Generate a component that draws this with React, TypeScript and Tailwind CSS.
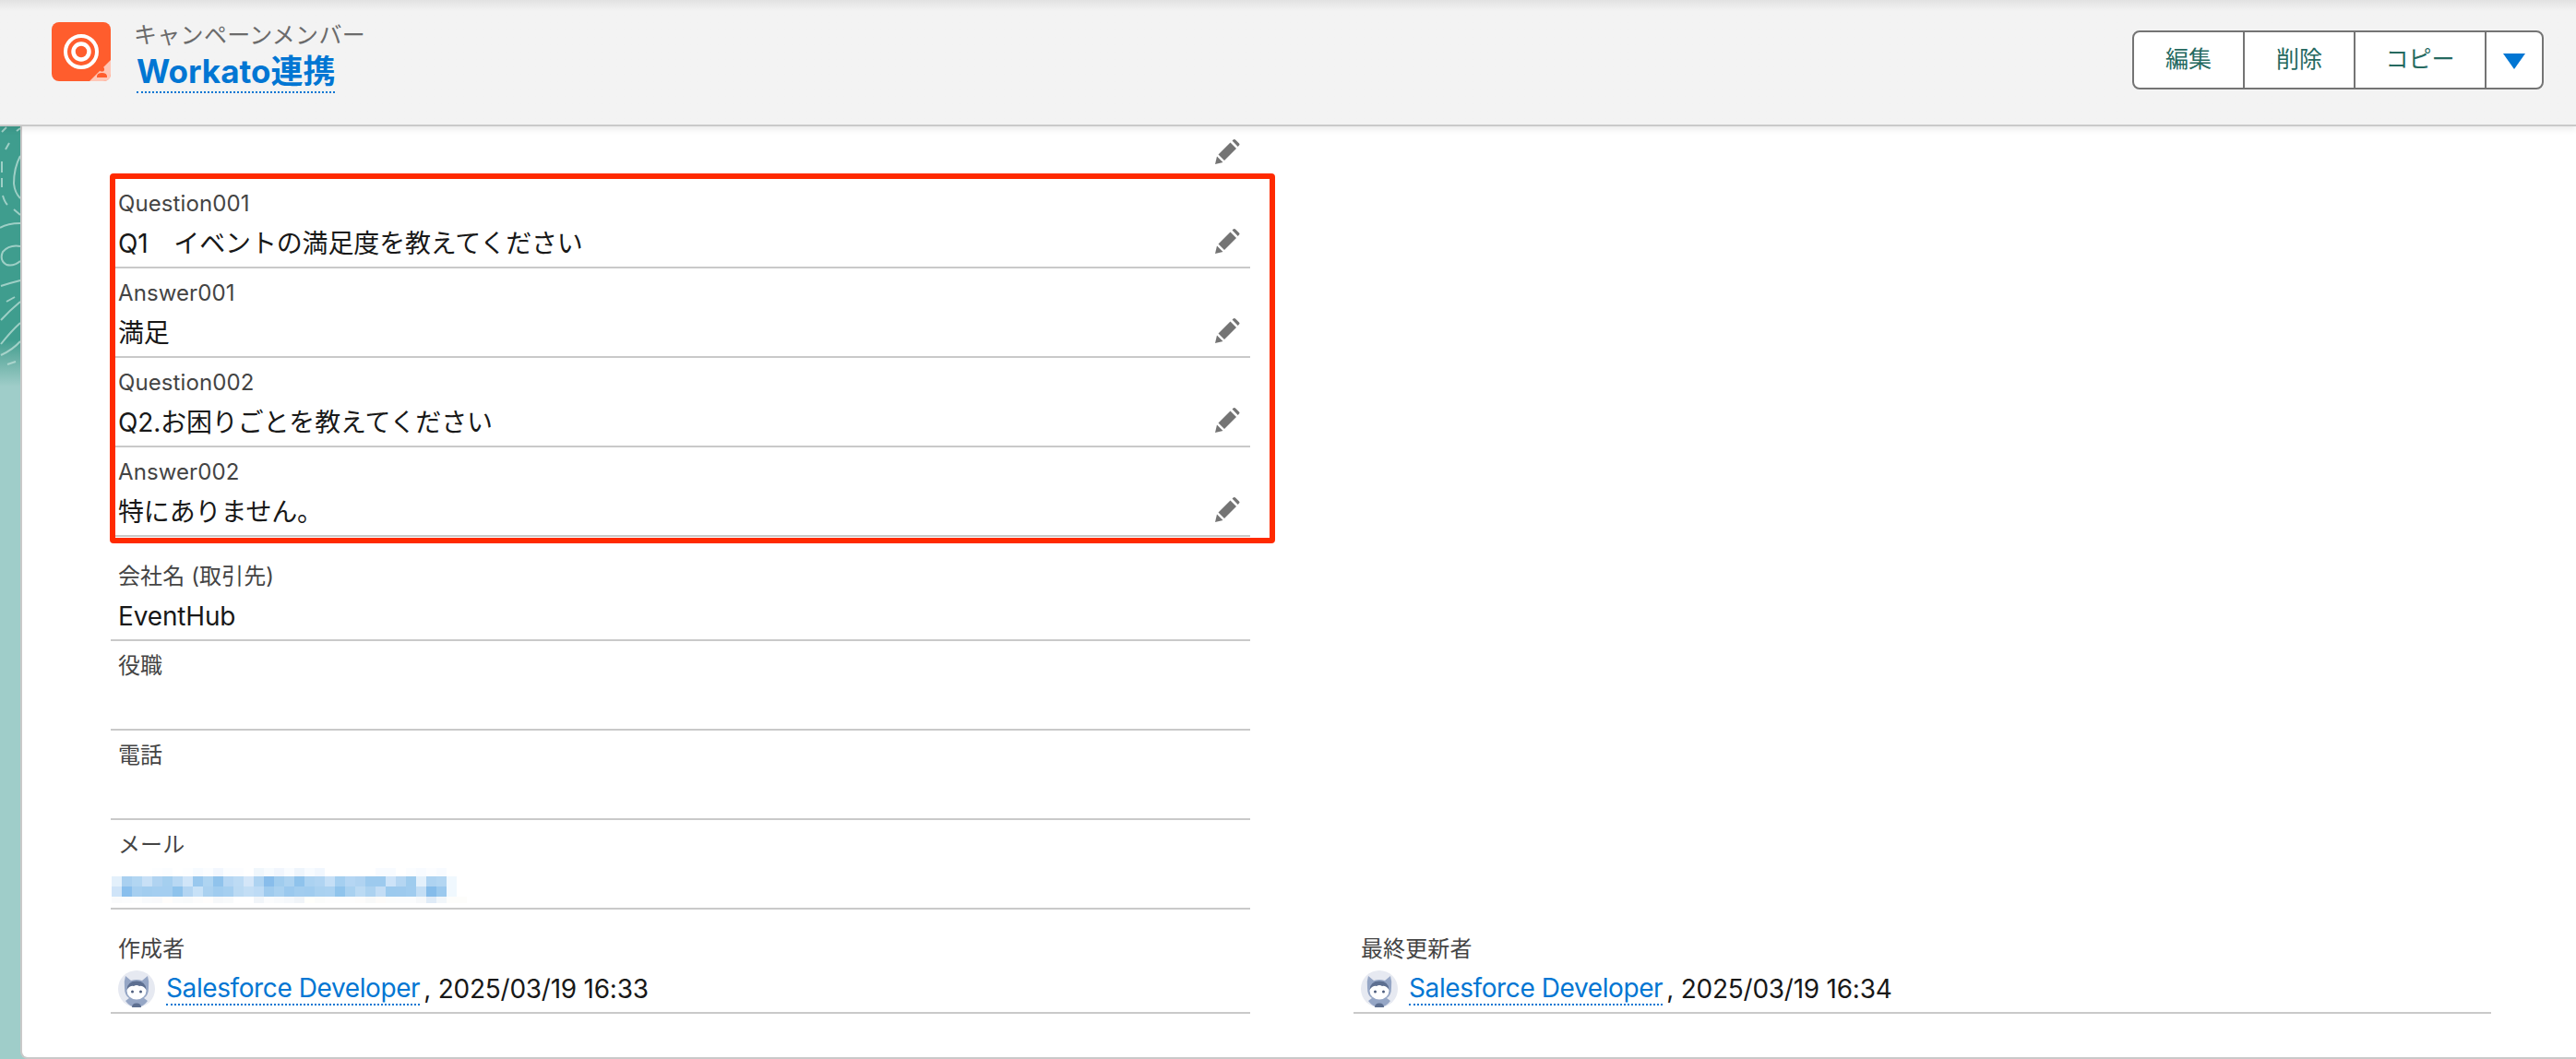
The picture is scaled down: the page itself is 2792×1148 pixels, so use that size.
import React from "react";

const font = { fontFamily: 'Inter, "Noto Sans CJK JP", sans-serif' };

function Pencil() {
  return (
    <svg width="27" height="27" viewBox="0 0 27 27" className="block" fill="#747474">
      <path d="M0 27 L2 18.5 L8.5 25 Z" />
      <path d="M3.5 16.5 L16.5 3.5 L23 10 L10 23 Z" />
      <path d="M18.5 1.5 L20 0.3 Q21 -0.4 22 .5 L26 4.5 Q27 5.5 26 6.5 L24.7 8 Z" />
    </svg>
  );
}

function Avatar() {
  return (
    <svg width="40" height="40" viewBox="0 0 40 40" className="block shrink-0">
      <circle cx="20" cy="20" r="20" fill="#e6e9f1" />
      <path d="M8 6 L14 11 Q20 9 26 11 L32 6 Q34 12 33 19 Q33 27 28 30 L32 33 Q27 40 20 40 Q13 40 8 33 L12 30 Q7 27 7 19 Q6 12 8 6 Z" fill="#95a6c5" />
      <ellipse cx="20" cy="22" rx="10.5" ry="9.5" fill="#ffffff" />
      <path d="M9.5 21 Q10 11.5 20 11.5 Q30 11.5 30.5 21 Q27 16 23 17 Q20 15 17 17 Q13 16 9.5 21 Z" fill="#5d6f90" />
      <circle cx="15.5" cy="23" r="1.5" fill="#4d5d7d" />
      <circle cx="24.5" cy="23" r="1.5" fill="#4d5d7d" />
      <path d="M15 40 Q15 35.5 20 35.5 Q25 35.5 25 40 Z" fill="#5d6f90" />
    </svg>
  );
}

function TargetIcon() {
  return (
    <svg width="64" height="64" viewBox="0 0 64 64" className="block shrink-0">
      <rect width="64" height="64" rx="8" fill="#ff5d2d" />
      <path d="M64 41 L64 56 Q64 64 56 64 L41 64 Z" fill="#ffc6b6" />
      <circle cx="32" cy="32" r="17" fill="none" stroke="#fff" strokeWidth="4" />
      <circle cx="32" cy="32" r="8.5" fill="none" stroke="#fff" strokeWidth="4.5" />
      <circle cx="54.5" cy="51" r="2.6" fill="#ff5d2d" />
      <path d="M49 59 Q49 55 54.5 55 Q60 55 60 59 L60 60 L49 60 Z" fill="#ff5d2d" />
    </svg>
  );
}

const mosaicRows: { y: number; h: number; x: number; colors: string[] }[] = [
  {
    y: 0,
    h: 9,
    x: 0,
    colors: ["#fff", "#fff", "#fff", "#fff", "#fdfeff", "#fbfdff", "#fff", "#fdfeff", "#f7fbff", "#fbfdff", "#f2f7fe", "#fbfdff", "#fcfdff", "#fff", "#f0f7fc", "#f7fbfe", "#f1f6fd", "#f9fcff", "#eef5fc", "#f7fbff", "#f1f7fe", "#fff", "#fff", "#fff", "#fff", "#fff", "#f8fbff", "#f8fbff", "#fff", "#fbfdff", "#f8fbff", "#fcfdff", "#f8fbff", "#fff", "#fff"],
  },
  {
    y: 9,
    h: 11,
    x: 0,
    colors: ["#e3f0fb", "#a9d0f0", "#b2d6f2", "#c8e0f6", "#b0d3f1", "#a5cfef", "#b8d8f3", "#d0e5f8", "#99c8ee", "#aed4f1", "#90c3ec", "#b5d6f3", "#bddbf4", "#d4e6f8", "#aed3f1", "#88bdeb", "#a0ccee", "#acd2f0", "#8fc3ec", "#abd2f1", "#b0d4f2", "#c5dff6", "#a5cff0", "#b5d6f3", "#b0d3f1", "#9dcaee", "#9dcaee", "#cde3f8", "#b5d6f2", "#9fccee", "#e3f0fb", "#aed3f1", "#b3d6f2", "#f0f8fe"],
  },
  {
    y: 20,
    h: 11,
    x: 0,
    colors: ["#cfe4f8", "#89bfed", "#a6cff0", "#a2cdef", "#a4cef0", "#a4cef0", "#8ec3ec", "#b3d5f2", "#c7e1f7", "#aad1f0", "#a0ccef", "#a5cff0", "#bbdaf3", "#c3def5", "#bddbf5", "#9fcbee", "#a9d1f0", "#9bc9ee", "#a2cdef", "#a0ccef", "#a9d1f0", "#abd2f1", "#90c4ec", "#a9d1f0", "#bbdaf3", "#acd2f0", "#c3ddf5", "#9ccaee", "#9dcaee", "#a0ccef", "#c3def5", "#85bcea", "#9bc9ee", "#f0f8fe"],
  },
  {
    y: 31,
    h: 7,
    x: 0,
    colors: ["#fafbfc", "#fbfcfd", "#fcfdfd", "#f8fafc", "#f8f9fb", "#fffdfb", "#f9fbfc", "#f8fafb", "#fcfcfc", "#fffdfc", "#f6f8fa", "#f8fafb", "#fff", "#fff", "#f1f5f9", "#fbfcfd", "#f8fafc", "#f5f8fb", "#f0f4f8", "#fffffb", "#fbfcfb", "#fdfdfd", "#fdfdfd", "#fdfdfd", "#fdfcfb", "#f8f9f9", "#fdfbf9", "#fbfcfc", "#fbfcfd", "#fbfcfd", "#f6f8fa", "#dfebf7", "#f1f6fa", "#fdfdfb", "#fdfdfb"],
  },
];

function Mosaic() {
  return (
    <svg width="385" height="38" viewBox="0 0 385 38" className="block" shapeRendering="crispEdges">
      {mosaicRows.map((r) =>
        r.colors.map((c, i) => <rect key={r.y + "-" + i} x={r.x + i * 11} y={r.y} width="11" height={r.h} fill={c} />)
      )}
    </svg>
  );
}

function Row({ label, value, edit = true, children }: { label: string; value?: string; edit?: boolean; children?: React.ReactNode }) {
  return (
    <div className="h-[97px] border-b-2 border-[#c9c9c9] pl-2 pt-[15px] relative flex">
      <div className="flex-1 min-w-0">
        <div className="text-[24px] leading-6 text-[#444444] tracking-[0.1px]">{label}</div>
        <div className="mt-[13px] h-9 text-[28px] leading-9 text-[#181818] tracking-[-0.15px] flex items-center whitespace-pre">{children ?? value}</div>
      </div>
      {edit && (
        <div className="w-[38px] shrink-0 pt-[39px]">
          <Pencil />
        </div>
      )}
    </div>
  );
}

function Creator({ time }: { time: string }) {
  return (
    <span className="flex items-center">
      <Avatar />
      <span className="ml-[12px] text-[#0176d3] border-b-2 border-dotted border-[#0176d3] leading-[34px] tracking-[-0.4px]">Salesforce Developer</span>
      <span className="ml-[4px] tracking-[-0.25px]">, {time}</span>
    </span>
  );
}

export default function App() {
  return (
    <div className="w-[2792px] h-[1148px] overflow-hidden flex flex-col bg-[#9fcdc9]" style={font}>
      <header className="relative z-10 h-[137px] shrink-0 bg-gradient-to-b from-[#e2e2e2] to-[#f3f3f3] to-[12px] border-b-2 border-[#c9c9c9] shadow-[0_4px_6px_rgba(0,0,0,0.07)] flex items-start justify-between pl-[56px] pr-[35px]">
        <div className="flex pt-6">
          <TargetIcon />
          <div className="ml-[25px]">
            <div className="text-[25px] leading-7 text-[#6b6b6b] whitespace-nowrap tracking-[0.3px]">キャンペーンメンバー</div>
            <div className="mt-[3px] ml-[3px] inline-block text-[35px] leading-[44px] font-bold text-[#0176d3] border-b-2 border-dotted border-[#0176d3]">Workato連携</div>
          </div>
        </div>
        <div className="mt-[33px] h-16 flex bg-white border-2 border-[#747474] rounded-lg text-[25px] text-[#25695f]">
          <div className="w-[120px] flex items-center justify-center border-r-2 border-[#747474]">編集</div>
          <div className="w-[120px] flex items-center justify-center border-r-2 border-[#747474]">削除</div>
          <div className="w-[142px] flex items-center justify-center border-r-2 border-[#747474]">コピー</div>
          <div className="w-[60px] flex items-center justify-center">
            <svg width="24" height="18" viewBox="0 0 24 18" className="mt-1">
              <path d="M0 0 H24 L12 17 Z" fill="#0176d3" />
            </svg>
          </div>
        </div>
      </header>

      <main className="flex-1 flex relative min-h-0">
        <div className="absolute left-0 top-0 w-[24px] h-[282px] bg-gradient-to-b from-[#3f9d8e] from-[82%] to-[#9fcdc9]">
          <svg width="24" height="282" viewBox="0 0 24 282" className="block" fill="none" stroke="#bfe0d8" strokeWidth="2" strokeOpacity="0.75">
            <path d="M2 6 L7 1 M18 5 L22 2" />
            <path d="M6 25 L10 18" />
            <path d="M2 38 L2 50 M2 56 L2 66" />
            <path d="M22 32 Q15 45 15 62 Q16 72 22 78" />
            <path d="M3 75 Q5 82 8 85 M15 90 L22 96" />
            <path d="M0 110 Q8 105 22 105" />
            <path d="M22 130 Q10 128 3 136 Q-1 145 7 150 Q15 152 22 146" />
            <path d="M1 173 Q10 170 22 167" />
            <path d="M7 190 L16 185" />
            <path d="M1 210 Q10 200 22 190" />
            <path d="M1 236 Q12 222 22 213" />
            <path d="M1 248 Q14 242 22 233" />
            <path d="M8 258 L17 255" />
          </svg>
        </div>
        <div className="relative flex-1 ml-[22px] bg-white border-l-2 border-b-2 border-[#c9c9c9] rounded-bl-lg pl-[96px] min-h-0">
          <div className="w-[1235px]">
            <div className="h-[57px] flex justify-end pr-[11px] pt-[14px]">
              <Pencil />
            </div>
            <div className="relative">
              <Row label="Question001" value="Q1　イベントの満足度を教えてください" />
              <Row label="Answer001" value="満足" />
              <Row label="Question002" value="Q2.お困りごとを教えてください" />
              <Row label="Answer002" value="特にありません。" />
              <div className="absolute -left-px -top-[6px] w-[1263px] h-[401px] border-[6px] border-[#ff2a00] rounded-sm pointer-events-none" />
            </div>
            <div className="mt-[16px]">
              <Row label="会社名 (取引先)" value="EventHub" edit={false} />
              <Row label="役職" edit={false} />
              <Row label="電話" edit={false} />
              <Row label="メール" edit={false}>
                <span className="-ml-[7px] mt-[1px] block">
                  <Mosaic />
                </span>
              </Row>
            </div>
          </div>
          <div className="mt-[16px] flex gap-[112px]">
            <div className="w-[1235px]">
              <Row label="作成者" edit={false}>
                <Creator time="2025/03/19 16:33" />
              </Row>
            </div>
            <div className="w-[1233px]">
              <Row label="最終更新者" edit={false}>
                <Creator time="2025/03/19 16:34" />
              </Row>
            </div>
          </div>
        </div>
      </main>
    </div>
  );
}
